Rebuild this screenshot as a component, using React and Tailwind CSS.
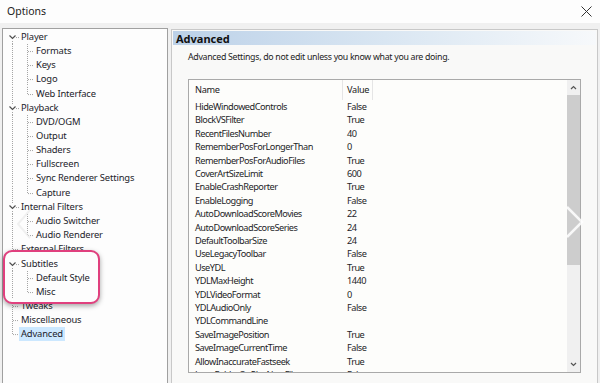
import React from "react";

const FONT = { fontFamily: '"Noto Sans", "Open Sans", Arial, sans-serif' };

const tree = [
  { t: "Player", children: ["Formats", "Keys", "Logo", "Web Interface"] },
  { t: "Playback", children: ["DVD/OGM", "Output", "Shaders", "Fullscreen", "Sync Renderer Settings", "Capture"] },
  { t: "Internal Filters", children: ["Audio Switcher", "Audio Renderer"] },
  { t: "External Filters" },
  { t: "Subtitles", children: ["Default Style", "Misc"] },
  { t: "Tweaks" },
  { t: "Miscellaneous" },
  { t: "Advanced", selected: true },
];

const rows = [];
tree.forEach((n, i) => {
  const first = i === 0;
  const last = i === tree.length - 1;
  if (n.children) {
    rows.push({ kind: "parent", t: n.t, first, last });
    n.children.forEach((c, j) =>
      rows.push({ kind: "child", t: c, lastChild: j === n.children.length - 1 })
    );
  } else {
    rows.push({ kind: "leaf", t: n.t, first, last, selected: n.selected });
  }
});

const H = 14.15;
const dot = { stroke: "#a5a5a5", strokeWidth: 1, strokeDasharray: "1 1" };

function Chevron() {
  return <path d="M6.5 5.5 L9.5 8.5 L12.5 5.5" fill="none" stroke="#505050" strokeWidth="1.2" />;
}

function Gutter({ row }) {
  const mid = H / 2;
  if (row.kind === "child") {
    return (
      <svg width="31" height={H} className="shrink-0">
        <line x1="9.5" y1="0" x2="9.5" y2={H} {...dot} />
        <line x1="24.5" y1="0" x2="24.5" y2={row.lastChild ? mid : H} {...dot} />
        <line x1="25" y1={mid + 0.5} x2="31" y2={mid + 0.5} {...dot} />
      </svg>
    );
  }
  if (row.kind === "parent") {
    return (
      <svg width="16" height={H} className="shrink-0">
        {!row.first && <line x1="9.5" y1="0" x2="9.5" y2="3" {...dot} />}
        <line x1="9.5" y1="11" x2="9.5" y2={H} {...dot} />
        <Chevron />
        <line x1="13" y1={mid + 0.5} x2="16" y2={mid + 0.5} {...dot} />
      </svg>
    );
  }
  return (
    <svg width="16" height={H} className="shrink-0">
      <line x1="9.5" y1="0" x2="9.5" y2={row.last ? mid : H} {...dot} />
      <line x1="10" y1={mid + 0.5} x2="16" y2={mid + 0.5} {...dot} />
    </svg>
  );
}

function TreeRow({ row }) {
  return (
    <div className="flex items-center h-[14.15px]">
      <Gutter row={row} />
      <span
        className={
          "px-[2px] leading-[14px] h-[14px] text-[9.4px] tracking-[-0.15px] text-[#1c1c2a] whitespace-nowrap " +
          (row.selected ? "bg-[#cce8ff]" : "")
        }
      >
        {row.t}
      </span>
    </div>
  );
}

const settings = [
  ["HideWindowedControls", "False"],
  ["BlockVSFilter", "True"],
  ["RecentFilesNumber", "40"],
  ["RememberPosForLongerThan", "0"],
  ["RememberPosForAudioFiles", "True"],
  ["CoverArtSizeLimit", "600"],
  ["EnableCrashReporter", "True"],
  ["EnableLogging", "False"],
  ["AutoDownloadScoreMovies", "22"],
  ["AutoDownloadScoreSeries", "24"],
  ["DefaultToolbarSize", "24"],
  ["UseLegacyToolbar", "False"],
  ["UseYDL", "True"],
  ["YDLMaxHeight", "1440"],
  ["YDLVideoFormat", "0"],
  ["YDLAudioOnly", "False"],
  ["YDLCommandLine", ""],
  ["SaveImagePosition", "True"],
  ["SaveImageCurrentTime", "False"],
  ["AllowInaccurateFastseek", "True"],
];

export default function App() {
  return (
    <div className="w-[600px] h-[383px] bg-[#f0f0f0] relative overflow-hidden" style={FONT}>
      {/* title bar */}
      <div className="h-[23px] bg-[#fdfdfd] flex items-center justify-between pl-[7px] pr-[8px]">
        <span className="text-[10.5px] text-[#222]">Options</span>
        <svg width="11" height="11" viewBox="0 0 11 11">
          <path d="M0.5 0.5 L10.5 10.5 M10.5 0.5 L0.5 10.5" stroke="#333" strokeWidth="1" />
        </svg>
      </div>

      <div className="flex pl-[2px] pt-[5px] gap-[3px]">
        {/* tree */}
        <div className="w-[166px] h-[380px] bg-[#fdfdfd] border border-[#a0a0a0] pt-[1px]">
          {rows.map((r, i) => (
            <TreeRow key={i} row={r} />
          ))}
        </div>

        {/* right panel */}
        <div className="w-[427px] h-[380px] mt-[1px] bg-[#f9f9f8] border border-[#c8c8c8] p-[1px]">
          <div className="h-[14px] bg-linear-to-r from-[#bcd1e8] via-[#d9e6f2] to-[#f7f9fb] flex items-center pl-[3px]">
            <span className="text-[11px] font-bold text-[#111] leading-none">Advanced</span>
          </div>
          <div className="pl-[15px] pt-[6px] text-[8.8px] tracking-[-0.3px] leading-[12px] text-[#222] whitespace-nowrap">
            Advanced Settings, do not edit unless you know what you are doing.
          </div>
          {/* list box */}
          <div className="ml-[15px] mt-[16px] w-[393px] h-[294px] border border-[#a9a9a9] bg-[#fdfdfb] flex overflow-hidden">
            <div className="flex-1 overflow-hidden">
              <div className="h-[20px] flex items-center text-[9.2px] text-[#222] tracking-[-0.3px]">
                <div className="w-[154px] pl-[6px] h-full flex items-center border-r border-[#e5e5e5]">Name</div>
                <div className="w-[30px] pl-[4px] h-full flex items-center border-r border-[#e5e5e5]">Value</div>
              </div>
              {settings.map(([n, v]) => (
                <div key={n} className="h-[13.4px] flex items-center text-[9.2px] text-[#1e1e28] tracking-[-0.5px] leading-none">
                  <div className="w-[154px] pl-[6px] whitespace-nowrap">{n}</div>
                  <div className="pl-[4px] whitespace-nowrap">{v}</div>
                </div>
              ))}
              <div className="h-[6px] overflow-hidden flex text-[9.2px] text-[#1e1e28] tracking-[-0.5px] leading-[13.4px]">
                <div className="w-[154px] pl-[6px] whitespace-nowrap">LoopFolderOnPlayNextFile</div>
                <div className="pl-[4px] whitespace-nowrap">False</div>
              </div>
            </div>
            {/* scrollbar */}
            <div className="w-[13px] bg-[#f0f0f0] flex flex-col">
              <div className="h-[15px] flex items-center justify-center">
                <svg width="7" height="5" viewBox="0 0 7 5">
                  <path d="M1 4 L3.5 1.5 L6 4" fill="none" stroke="#555" strokeWidth="1.2" />
                </svg>
              </div>
              <div className="h-[170px] bg-[#cdcdcd]" />
              <div className="flex-1" />
              <div className="h-[15px] flex items-center justify-center">
                <svg width="7" height="5" viewBox="0 0 7 5">
                  <path d="M1 1 L3.5 3.5 L6 1" fill="none" stroke="#555" strokeWidth="1.2" />
                </svg>
              </div>
            </div>
          </div>
        </div>
      </div>

      {/* magnified highlight overlay */}
      <div className="absolute left-[3px] top-[250px] w-[97px] h-[54px] bg-[#fdfdfd] border-2 border-[#e0407e] rounded-[9px] shadow-[0_2px_5px_rgba(0,0,0,0.35)] overflow-hidden">
        <div className="-ml-[2px] mt-[5px]">
          <div className="flex items-center h-[14.15px]">
            <svg width="16" height={H} className="shrink-0">
              <Chevron />
              <line x1="9.5" y1="11" x2="9.5" y2={H} {...dot} />
              <line x1="13" y1={H / 2 + 0.5} x2="16" y2={H / 2 + 0.5} {...dot} />
            </svg>
            <span className="px-[2px] text-[9.4px] tracking-[-0.15px] text-[#1c1c2a] leading-[14px]">Subtitles</span>
          </div>
          <TreeRow row={{ kind: "child", t: "Default Style" }} />
          <TreeRow row={{ kind: "child", t: "Misc", lastChild: true }} />
        </div>
      </div>

      {/* carousel arrows */}
      <svg className="absolute left-[565px] top-[205px]" width="20" height="34" viewBox="0 0 20 34">
        <path d="M2 2 L17 17 L2 32" fill="none" stroke="#ffffff" strokeOpacity="0.85" strokeWidth="2.5" />
      </svg>
      <svg className="absolute left-[16px] top-[208px]" width="16" height="32" viewBox="0 0 16 32">
        <path d="M14 2 L2 16 L14 30" fill="none" stroke="#e8e8e8" strokeOpacity="0.6" strokeWidth="2" />
      </svg>
    </div>
  );
}
